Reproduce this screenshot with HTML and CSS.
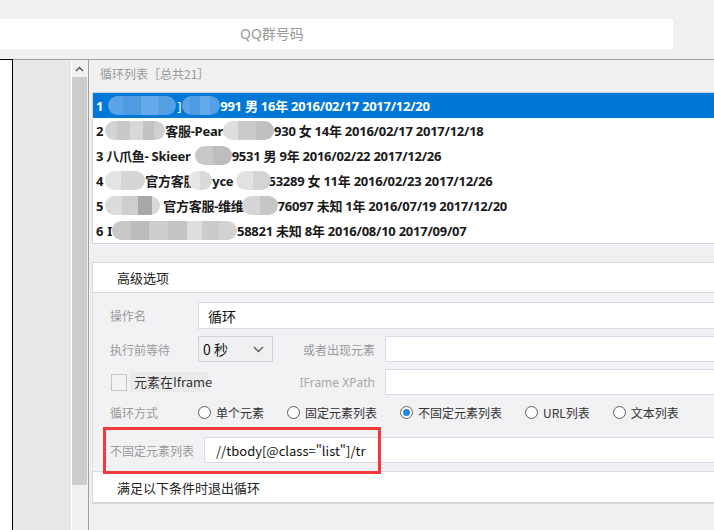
FILE: index.html
```html
<!DOCTYPE html>
<html lang="zh">
<head>
<meta charset="utf-8">
<title>循环</title>
<link rel="stylesheet" href="styles.css">
</head>
<body>
<div class="top"><div class="qq">QQ群号码</div></div>
<div class="main">
  <div class="leftbox"></div>
  <div class="gray"></div>
  <div class="scroll">
    <div class="arrow"><svg width="9" height="6" viewBox="0 0 9 6"><path d="M1 5 L4.5 1.5 L8 5" fill="none" stroke="#5a5a5a" stroke-width="1.5"/></svg></div>
    <div class="thumb"></div>
  </div>
  <div class="panel">
    <div class="title">循环列表［总共21］</div>
    <div class="list">
      <div class="row sel"><span>1</span><span class="b bl b1a"></span><span class="frag">]</span><span class="b bl b1b"></span><span>991 男 16年 2016/02/17 2017/12/20</span></div>
      <div class="row"><span>2</span><span class="b b2a"></span><span>客服-Pear</span><span class="b b2b"></span><span>930 女 14年 2016/02/17 2017/12/18</span></div>
      <div class="row"><span>3 八爪鱼- Skieer </span><span class="b b3a"></span><span>9531 男 9年 2016/02/22 2017/12/26</span></div>
      <div class="row"><span>4</span><span class="b b4a"></span><span>官方客服</span><span class="b b4b"></span><span>yce </span><span class="b b4c"></span><span>53289 女 11年 2016/02/23 2017/12/26</span></div>
      <div class="row"><span>5</span><span class="b b5a"></span><span class="t5">官方客服-维维</span><span class="b b5b"></span><span>76097 未知 1年 2016/07/19 2017/12/20</span></div>
      <div class="row"><span>6</span><span class="frag6">I</span><span class="b b6a"></span><span>58821 未知 8年 2016/08/10 2017/09/07</span></div>
    </div>
    <div class="adv">高级选项</div>
    <div class="form">
      <div class="frow r1"><span class="lbl">操作名</span><div class="inp">循环</div></div>
      <div class="frow r2"><span class="lbl">执行前等待</span><div class="select"><span>0 秒</span><svg width="11" height="7" viewBox="0 0 11 7"><path d="M1 1 L5.5 5.5 L10 1" fill="none" stroke="#555" stroke-width="1.3"/></svg></div><span class="lbl2">或者出现元素</span><div class="inp"></div></div>
      <div class="frow r3"><div class="chkwrap"><span class="chk"></span><span class="chklbl">元素在Iframe</span></div><span class="lbl2 en">IFrame XPath</span><div class="inp"></div></div>
      <div class="frow r4"><span class="lbl">循环方式</span>
        <span class="radio"><span class="circ"></span>单个元素</span>
        <span class="radio"><span class="circ"></span>固定元素列表</span>
        <span class="radio"><span class="circ on"></span>不固定元素列表</span>
        <span class="radio"><span class="circ"></span>URL列表</span>
        <span class="radio"><span class="circ"></span>文本列表</span>
      </div>
      <div class="frow r5"><span class="lbl lbl5">不固定元素列表</span><div class="inp xp">//tbody[@class="list"]/tr</div></div>
      <div class="redbox"></div>
    </div>
    <div class="exit">满足以下条件时退出循环</div>
  </div>
</div>
</body>
</html>
```
FILE: styles.css
```css
* { box-sizing: border-box; }
html, body { margin: 0; padding: 0; }
body {
  width: 714px;
  height: 530px;
  overflow: hidden;
  background: #f0f0f0;
  font-family: "Noto Sans", "Noto Sans CJK SC", sans-serif;
  color: #222;
}
.top {
  height: 60px;
  border-bottom: 1px solid #a0a0a0;
  padding-top: 19px;
}
.qq {
  width: 673px;
  height: 30px;
  background: #fff;
  color: #999;
  font-size: 14px;
  line-height: 30px;
  padding-left: 240px;
}
.main { display: flex; height: 470px; }
.leftbox {
  width: 13px;
  margin-top: -1px;
  background: #fff;
  border-top: 1px solid #000;
  border-right: 1px solid #000;
}
.gray { width: 58px; background: #e8e8eb; }
.scroll {
  width: 17px;
  border-left: 1px solid #fff;
  background: #f0f0f0;
  display: flex;
  flex-direction: column;
}
.arrow {
  height: 17px;
  width: 15px;
  padding-top: 6px;
  display: flex;
  justify-content: center;
  align-items: flex-start;
}
.arrow svg { display: block; }
.thumb { width: 15px; height: 408px; background: #cdcdcd; }
.panel {
  flex: 1;
  border-left: 1px solid #a0a0a0;
  overflow: hidden;
  display: flex;
  flex-direction: column;
  background: #f0f0f0;
}
.title {
  height: 32px;
  padding: 5px 0 0 11px;
  font-size: 12px;
  line-height: 17px;
  color: #999;
  font-family: "Noto Sans CJK SC", sans-serif;
}
.list {
  margin-left: 3px;
  width: 640px;
  height: 152px;
  flex: none;
  border: 1px solid #cdd4e4;
  background: #fff;
}
.row {
  height: 25px;
  padding-left: 3px;
  display: flex;
  align-items: center;
  white-space: pre;
  font-size: 13px;
  font-weight: bold;
  letter-spacing: -0.25px;
  color: #1a1a1a;
}
.row.sel { background: #0078d7; color: #fff; }
.b {
  position: relative;
  display: inline-block;
  height: 19px;
  border-radius: 10px;
  flex: none;
  background: linear-gradient(90deg, #d4d4d4 0 20%, #c8c8c8 20% 42%, #d8d8d8 42% 63%, #c2c2c2 63% 82%, #cfcfcf 82% 100%);
}
.b.bl {
  background: linear-gradient(90deg, #5aa3e6 0 22%, #4e9be3 22% 48%, #63aaea 48% 74%, #55a0e5 74% 100%);
}
.frag { font-weight: normal; margin: 0 1px; }
.b1a { margin-left: 5px; width: 68px; }
.b1b { width: 38px; }
.b2a { margin-left: 2px; width: 60px; }
.b2b { width: 51px; background: linear-gradient(90deg, #dedede 0 30%, #cbcbcb 30% 65%, #c0c0c0 65% 100%); }
.b3a { margin-left: 1px; width: 37px; background: linear-gradient(90deg, #c9c9c9 0 50%, #bdbdbd 50% 100%); }
.b4a { margin-left: 2px; width: 40px; background: linear-gradient(90deg, #e4e4e4 0 40%, #d6d6d6 40% 100%); }
.b4b { margin-left: -8px; width: 24px; background: linear-gradient(90deg, #e6e6e6 0 50%, #dadada 50% 100%); }
.b4c { width: 35px; margin-right: -3px; background: linear-gradient(90deg, #e2e2e2 0 50%, #d4d4d4 50% 100%); }
.b5a { margin-left: 2px; width: 55px; background: linear-gradient(90deg, #dcdcdc 0 30%, #cecece 30% 60%, #a8a8a8 60% 85%, #d8d8d8 85% 100%); }
.t5 { margin-left: 3px; }
.b5b { margin-left: -2px; width: 36px; background: linear-gradient(90deg, #d6d6d6 0 50%, #c6c6c6 50% 100%); }
.frag6 { margin-left: 4px; }
.b6a { width: 125px; background: linear-gradient(90deg, #c8c8c8 0 15%, #bcbcbc 15% 30%, #cdcdcd 30% 45%, #c4c4c4 45% 60%, #dedede 60% 72%, #cbcbcb 72% 86%, #d2d2d2 86% 100%); }

.adv {
  margin-top: 18px;
  margin-left: 3px;
  height: 31px;
  flex: none;
  border-top: 1px solid #d5d9e3;
  border-left: 1px solid #d5d9e3;
  border-bottom: 1px solid #dadada;
  background: #fff;
  padding-left: 24px;
  font-size: 13px;
  line-height: 29px;
  color: #222;
  font-family: "Noto Sans CJK SC", sans-serif;
}
.form {
  position: relative;
  margin-left: 3px;
  height: 178px;
  flex: none;
  border-left: 1px solid #dde0ea;
  background: #f2f2f4;
  padding: 9px 0 8px 17px;
  font-family: "Noto Sans CJK SC", sans-serif;
}
.frow { display: flex; align-items: center; }
.r1 { height: 27px; }
.r2 { height: 26px; margin-top: 7px; }
.r3 { height: 26px; margin-top: 7px; }
.r4 { height: 24px; margin-top: 5px; }
.r5 { height: 26px; margin-top: 13px; }
.lbl { width: 88px; flex: none; font-size: 12px; color: #9a9a9a; }
.lbl5 { width: 94px; }
.inp {
  flex: 1;
  height: 100%;
  background: #fff;
  border: 1px solid #d9dce8;
  border-right: none;
  padding-left: 9px;
  font-size: 14px;
  color: #111;
  display: flex;
  align-items: center;
}
.xp { padding-left: 11px; font-size: 13px; }
.select {
  width: 75px;
  height: 100%;
  flex: none;
  border: 1px solid #d2d3d8;
  background: #f0f0f2;
  padding: 0 8px 0 4px;
  font-size: 14px;
  color: #111;
  display: flex;
  align-items: center;
  justify-content: space-between;
}
.select svg { display: block; }
.lbl2 {
  width: 102px;
  flex: none;
  margin-right: 10px;
  text-align: right;
  font-size: 12px;
  color: #9a9a9a;
}
.lbl2.en { font-family: "Noto Sans", sans-serif; font-size: 12px; color: #a8a8a8; }
.chkwrap { width: 163px; flex: none; display: flex; align-items: center; }
.chk {
  width: 16px;
  height: 17px;
  margin-left: 1px;
  border: 1px solid #c4c4c4;
  background: #f3f3f3;
}
.chklbl {
  margin-left: 3px;
  width: 78px;
  height: 20px;
  padding-left: 4px;
  background: #ebebed;
  font-size: 13px;
  line-height: 20px;
  color: #333;
  white-space: nowrap;
}
.radio {
  display: flex;
  align-items: center;
  gap: 5px;
  margin-right: 23px;
  font-size: 12px;
  color: #333;
  white-space: nowrap;
}
.circ {
  width: 13px;
  height: 13px;
  border-radius: 50%;
  border: 1px solid #5c5c5c;
  background: #fff;
  display: flex;
  align-items: center;
  justify-content: center;
}
.circ.on { border-color: #666; }
.circ.on::after {
  content: "";
  width: 7px;
  height: 7px;
  border-radius: 50%;
  background: #1e88e5;
}
.redbox {
  position: absolute;
  left: 10px;
  top: 134px;
  width: 278px;
  height: 47px;
  border: 3px solid #f23a3a;
  z-index: 2;
}
.exit {
  margin-left: 3px;
  height: 33px;
  flex: none;
  border-left: 1px solid #d5d9e3;
  border-top: 1px solid #d8dbe4;
  border-bottom: 2px solid #d4d6da;
  background: #fff;
  padding: 2px 0 0 24px;
  font-size: 13px;
  line-height: 28px;
  color: #222;
  font-family: "Noto Sans CJK SC", sans-serif;
}
```
